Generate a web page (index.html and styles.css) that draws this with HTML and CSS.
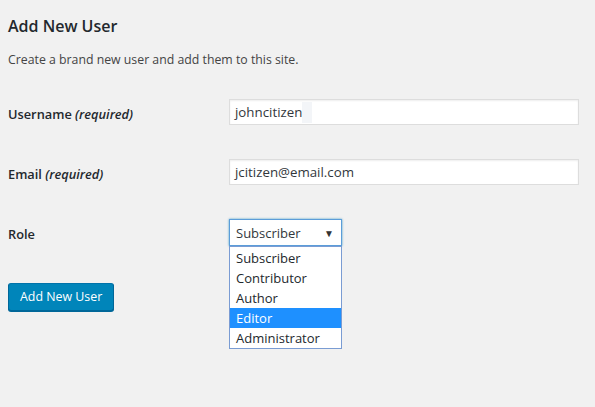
FILE: index.html
```html
<!DOCTYPE html>
<html>
<head>
<meta charset="utf-8">
<link rel="stylesheet" href="styles.css">
</head>
<body>
<div class="page">
  <h1 class="title">Add New User</h1>
  <p class="desc">Create a brand new user and add them to this site.</p>
  <div class="form">
    <div class="row">
      <div class="label">Username <em>(required)</em></div>
      <div class="field"><div class="input">johncitizen<span class="ghost"></span></div></div>
    </div>
    <div class="row">
      <div class="label">Email <em>(required)</em></div>
      <div class="field"><div class="input">jcitizen@email.com</div></div>
    </div>
    <div class="row role">
      <div class="label">Role</div>
      <div class="field">
        <div class="select-wrap">
          <div class="select"><span>Subscriber</span><span class="arrow">&#9660;</span></div>
          <ul class="options">
            <li>Subscriber</li>
            <li>Contributor</li>
            <li>Author</li>
            <li class="hl">Editor</li>
            <li>Administrator</li>
          </ul>
        </div>
      </div>
    </div>
  </div>
  <div class="actions"><button class="btn">Add New User</button></div>
</div>
</body>
</html>
```
FILE: styles.css
```css
html, body { margin: 0; padding: 0; }
body {
  background: #f1f1f1;
  font-family: "Open Sans", "Noto Sans", sans-serif;
  color: #23282d;
  width: 595px;
  height: 407px;
  overflow: hidden;
}
.page { padding: 14px 8px 0 8px; }
.title {
  margin: 0;
  font-size: 16px;
  line-height: 24px;
  font-weight: 600;
}
.desc {
  margin: 13px 0 0 0;
  font-size: 12.3px;
  line-height: 18px;
  color: #444;
}
.form {
  margin-top: 30px;
  display: flex;
  flex-direction: column;
  gap: 34px;
}
.row {
  display: flex;
  align-items: center;
  height: 26px;
}
.row.role { height: 27px; }
.label {
  width: 221px;
  font-size: 12.8px;
  font-weight: 600;
  padding-top: 3px;
}
.label em { font-weight: 600; font-style: italic; }
.field { width: 350px; }
.input {
  box-sizing: border-box;
  height: 26px;
  width: 350px;
  background: #fff;
  border: 1px solid #ddd;
  box-shadow: inset 0 1px 2px rgba(0,0,0,.07);
  font-size: 13.3px;
  line-height: 24px;
  padding-left: 5px;
  color: #32373c;
  display: flex;
  align-items: center;
}
.ghost {
  display: inline-block;
  width: 10px;
  height: 21px;
  background: #f3f5f8;
}
.select-wrap { position: relative; width: 113px; }
.select {
  box-sizing: border-box;
  height: 27px;
  width: 113px;
  background: #fff;
  border: 1px solid #5b9dd9;
  box-shadow: 0 0 2px rgba(30,140,190,.8);
  font-size: 13px;
  color: #32373c;
  display: flex;
  align-items: center;
  justify-content: space-between;
  padding: 0 7px 0 6px;
}
.arrow { font-size: 10px; color: #333; }
.options {
  position: absolute;
  left: 0;
  top: 27px;
  width: 113px;
  box-sizing: border-box;
  margin: 0;
  padding: 1px 0 0 0;
  list-style: none;
  background: #fff;
  border: 1px solid #7a9cd3;
  font-size: 13px;
  color: #23282d;
}
.options li {
  height: 20px;
  line-height: 20px;
  padding-left: 6px;
}
.options li.hl { background: #1e90ff; color: #fff; }
.actions { margin-top: 37px; }
.btn {
  height: 28px;
  padding: 0 11px;
  background: #0085ba;
  border: 1px solid #0073aa;
  border-color: #0073aa #006799 #006799;
  border-radius: 3px;
  box-shadow: 0 1px 0 #006799;
  color: #fff;
  font-family: "Open Sans", "Noto Sans", sans-serif;
  font-size: 12.4px;
  line-height: 26px;
}
```
